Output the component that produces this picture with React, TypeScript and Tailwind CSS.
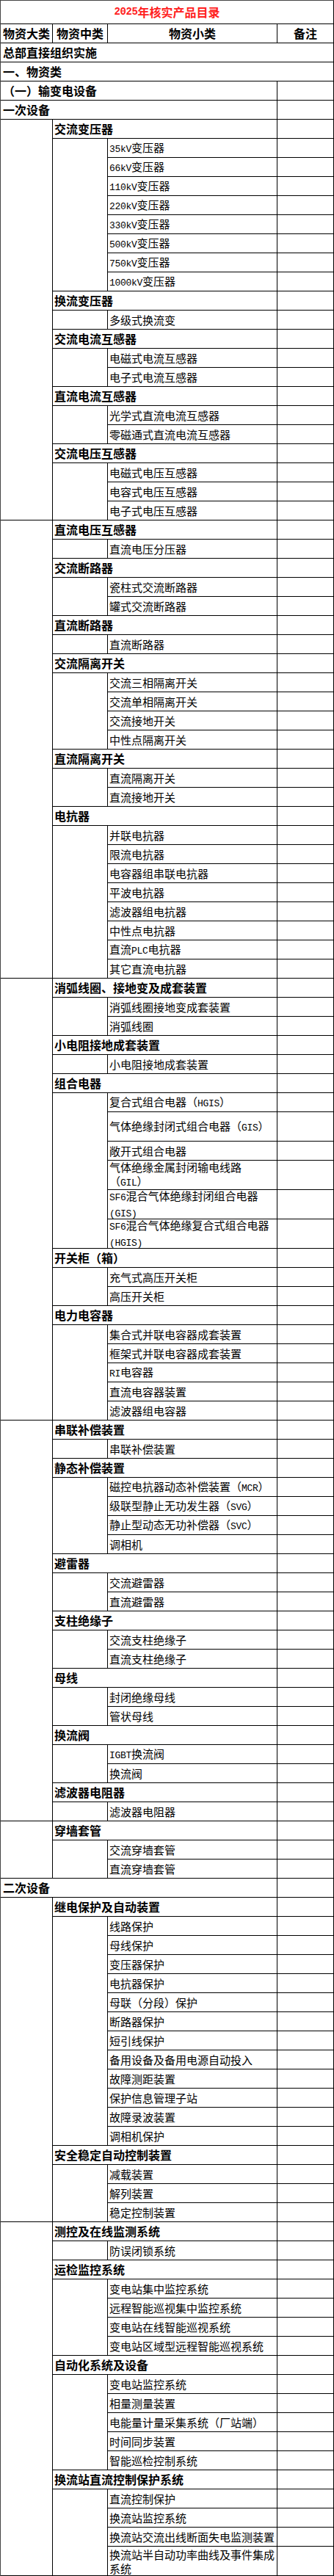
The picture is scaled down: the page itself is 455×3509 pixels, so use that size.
import React from 'react';

type Item = string | { lines: string[] };
type Cat = { n: string; items: Item[] };

const G1: Cat[] = [
  { n: '交流变压器', items: ['35kV变压器', '66kV变压器', '110kV变压器', '220kV变压器', '330kV变压器', '500kV变压器', '750kV变压器', '1000kV变压器'] },
  { n: '换流变压器', items: ['多级式换流变'] },
  { n: '交流电流互感器', items: ['电磁式电流互感器', '电子式电流互感器'] },
  { n: '直流电流互感器', items: ['光学式直流电流互感器', '零磁通式直流电流互感器'] },
  { n: '交流电压互感器', items: ['电磁式电压互感器', '电容式电压互感器', '电子式电压互感器'] },
];
const G2: Cat[] = [
  { n: '直流电压互感器', items: ['直流电压分压器'] },
  { n: '交流断路器', items: ['瓷柱式交流断路器', '罐式交流断路器'] },
  { n: '直流断路器', items: ['直流断路器'] },
  { n: '交流隔离开关', items: ['交流三相隔离开关', '交流单相隔离开关', '交流接地开关', '中性点隔离开关'] },
  { n: '直流隔离开关', items: ['直流隔离开关', '直流接地开关'] },
  { n: '电抗器', items: ['并联电抗器', '限流电抗器', '电容器组串联电抗器', '平波电抗器', '滤波器组电抗器', '中性点电抗器', '直流PLC电抗器', '其它直流电抗器'] },
];
const G3: Cat[] = [
  { n: '消弧线圈、接地变及成套装置', items: ['消弧线圈接地变成套装置', '消弧线圈'] },
  { n: '小电阻接地成套装置', items: ['小电阻接地成套装置'] },
  {
    n: '组合电器',
    items: [
      '复合式组合电器（HGIS）',
      { lines: ['气体绝缘封闭式组合电器（GIS）'] },
      '敞开式组合电器',
      { lines: ['气体绝缘金属封闭输电线路', '（GIL）'] },
      { lines: ['SF6混合气体绝缘封闭组合电器', '(GIS)'] },
      { lines: ['SF6混合气体绝缘复合式组合电器', '(HGIS)'] },
    ],
  },
  { n: '开关柜（箱）', items: ['充气式高压开关柜', '高压开关柜'] },
  { n: '电力电容器', items: ['集合式并联电容器成套装置', '框架式并联电容器成套装置', 'RI电容器', '直流电容器装置', '滤波器组电容器'] },
];
const G4: Cat[] = [
  { n: '串联补偿装置', items: ['串联补偿装置'] },
  { n: '静态补偿装置', items: ['磁控电抗器动态补偿装置（MCR）', '级联型静止无功发生器（SVG）', '静止型动态无功补偿器（SVC）', '调相机'] },
  { n: '避雷器', items: ['交流避雷器', '直流避雷器'] },
  { n: '支柱绝缘子', items: ['交流支柱绝缘子', '直流支柱绝缘子'] },
  { n: '母线', items: ['封闭绝缘母线', '管状母线'] },
  { n: '换流阀', items: ['IGBT换流阀', '换流阀'] },
  { n: '滤波器电阻器', items: ['滤波器电阻器'] },
];
const G5: Cat[] = [{ n: '穿墙套管', items: ['交流穿墙套管', '直流穿墙套管'] }];
const G6: Cat[] = [
  {
    n: '继电保护及自动装置',
    items: ['线路保护', '母线保护', '变压器保护', '电抗器保护', '母联（分段）保护', '断路器保护', '短引线保护', '备用设备及备用电源自动投入', '故障测距装置', '保护信息管理子站', '故障录波装置', '调相机保护'],
  },
  { n: '安全稳定自动控制装置', items: ['减载装置', '解列装置', '稳定控制装置'] },
];
const G7: Cat[] = [
  { n: '测控及在线监测系统', items: ['防误闭锁系统'] },
  { n: '运检监控系统', items: ['变电站集中监控系统', '远程智能巡视集中监控系统', '变电站在线智能巡视系统', '变电站区域型远程智能巡视系统'] },
  { n: '自动化系统及设备', items: ['变电站监控系统', '相量测量装置', '电能量计量采集系统（厂站端）', '时间同步装置', '智能巡检控制系统'] },
  {
    n: '换流站直流控制保护系统',
    items: ['直流控制保护', '换流站监控系统', '换流站交流出线断面失电监测装置', { lines: ['换流站半自动功率曲线及事件集成', '系统'] }],
  },
];

function Txt({ s, big }: { s: string; big?: boolean }) {
  const parts = s.split(/([\x21-\x7e]+)/);
  return (
    <>
      {parts.map((p, i) =>
        i % 2 === 1 ? (
          <span
            key={i}
            className={
              big
                ? "font-['Liberation_Mono',monospace] text-[14px] tracking-[-0.4px]"
                : "font-['Liberation_Mono',monospace] text-[13px] tracking-[-0.3px]"
            }
          >
            {p}
          </span>
        ) : (
          <React.Fragment key={i}>{p}</React.Fragment>
        )
      )}
    </>
  );
}

function Col4() {
  return <div className="w-[77px] shrink-0 border-r border-b border-black" />;
}

function ItemRow({ it }: { it: Item }) {
  const tall = typeof it !== 'string';
  const lines = typeof it === 'string' ? [it] : it.lines;
  return (
    <div className={tall ? 'flex h-[40px]' : 'flex h-[26px]'}>
      <div className="w-[231px] shrink-0 border-r border-b border-black flex flex-col justify-center pl-[2px] text-[15px] leading-[19px] whitespace-nowrap">
        {lines.map((l, i) => (
          <div key={i}>
            <Txt s={l} />
          </div>
        ))}
      </div>
      <Col4 />
    </div>
  );
}

function CatBlock({ c }: { c: Cat }) {
  return (
    <div className="flex flex-col">
      <div className="flex h-[26px]">
        <div className="w-[306px] shrink-0 border-r border-b border-black flex items-center pl-[2px] text-[16px] font-bold leading-[19px] whitespace-nowrap">
          {c.n}
        </div>
        <Col4 />
      </div>
      <div className="flex">
        <div className="w-[75px] shrink-0 border-r border-b border-black" />
        <div className="flex flex-col">
          {c.items.map((it, i) => (
            <ItemRow key={i} it={it} />
          ))}
        </div>
      </div>
    </div>
  );
}

function Group({ cats }: { cats: Cat[] }) {
  return (
    <div className="flex">
      <div className="w-[71px] shrink-0 border-r border-b border-black" />
      <div className="flex flex-col">
        {cats.map((c, i) => (
          <CatBlock key={i} c={c} />
        ))}
      </div>
    </div>
  );
}

function FullRow({ text }: { text: string }) {
  return (
    <div className="flex h-[26px] border-r border-b border-black items-center pl-[3px] text-[16px] font-bold leading-[19px]">
      {text}
    </div>
  );
}

function SecRow({ text }: { text: string }) {
  return (
    <div className="flex h-[26px]">
      <div className="w-[377px] shrink-0 border-r border-b border-black flex items-center pl-[3px] text-[16px] font-bold leading-[19px]">
        {text}
      </div>
      <Col4 />
    </div>
  );
}

export default function App() {
  return (
    <div className="w-[455px] bg-white text-black font-['Noto_Sans_CJK_SC',sans-serif] border-l border-t border-[#444]">
      <div className="h-[32px] border-r border-b border-black flex items-center justify-center text-[16px] font-bold text-[#ff2020] leading-[19px]">
        <Txt s="2025年核实产品目录" big />
      </div>
      <div className="flex h-[26px] text-[16px] font-bold leading-[19px]">
        <div className="w-[71px] shrink-0 border-r border-b border-black flex items-center justify-center">物资大类</div>
        <div className="w-[75px] shrink-0 border-r border-b border-black flex items-center justify-center">物资中类</div>
        <div className="w-[231px] shrink-0 border-r border-b border-black flex items-center justify-center">物资小类</div>
        <div className="w-[77px] shrink-0 border-r border-b border-black flex items-center justify-center">备注</div>
      </div>
      <FullRow text="总部直接组织实施" />
      <FullRow text="一、物资类" />
      <SecRow text="（一）输变电设备" />
      <SecRow text="一次设备" />
      <Group cats={G1} />
      <Group cats={G2} />
      <Group cats={G3} />
      <Group cats={G4} />
      <Group cats={G5} />
      <SecRow text="二次设备" />
      <Group cats={G6} />
      <Group cats={G7} />
    </div>
  );
}
